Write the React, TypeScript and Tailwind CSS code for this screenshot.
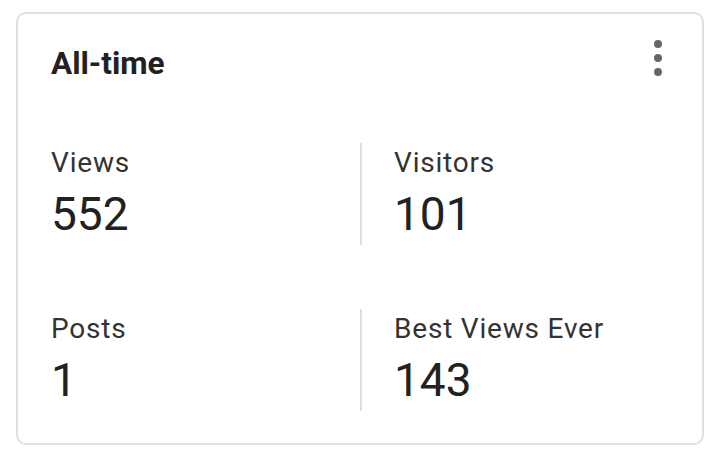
import React from "react";

function Cell({ label, value, divider, className = "" }: { label: string; value: string; divider?: boolean; className?: string }) {
  return (
    <div
      className={
        (divider ? "border-l-2 border-[#e0e0e0] pl-[32px] " : "pl-[33px] ") +
        "pt-[2px] pb-[5px] " +
        className
      }
    >
      <div className="text-[28px] leading-[36px] tracking-[0.8px] text-[#333333]">{label}</div>
      <div className="mt-[7px] text-[46px] leading-[52px] text-[#212121]">{value}</div>
    </div>
  );
}

export default function App() {
  return (
    <div
      className="w-[719px] h-[456px] bg-white pt-[12px] pl-[16px] pr-[15px] pb-[11px]"
      style={{ fontFamily: "Roboto, 'Noto Sans', sans-serif" }}
    >
      <div className="h-full rounded-[10px] border-2 border-[#e0e0e0] bg-white pt-[30px]">
        <div className="flex justify-between pl-[33px] pr-[32px]">
          <h2 className="text-[31.5px] leading-[40px] font-bold text-[#212121]">All-time</h2>
          <svg width="24" height="36" viewBox="0 0 24 36" className="-mt-[4.5px]">
            <circle cx="12" cy="4" r="4" fill="#666666" />
            <circle cx="12" cy="18" r="4" fill="#666666" />
            <circle cx="12" cy="32" r="4" fill="#666666" />
          </svg>
        </div>
        <div className="mt-[59px] grid grid-cols-2 gap-y-[64px]">
          <Cell label="Views" value="552" />
          <Cell label="Visitors" value="101" divider />
          <Cell label="Posts" value="1" />
          <Cell label="Best Views Ever" value="143" divider />
        </div>
      </div>
    </div>
  );
}
